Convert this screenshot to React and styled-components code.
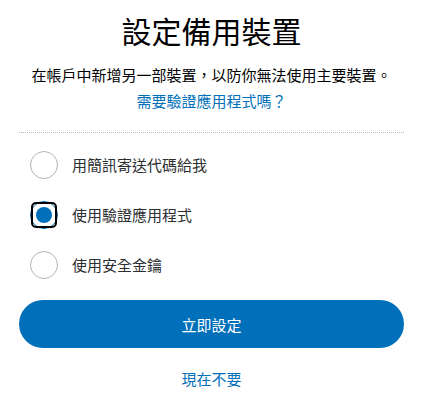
import React, { useState } from "react";
import styled, { createGlobalStyle } from "styled-components";

const GlobalStyle = createGlobalStyle`
  body {
    margin: 0;
    background: #ffffff;
    font-family: "Noto Sans CJK TC", "Noto Sans", "Liberation Sans", sans-serif;
    color: #2c2e2f;
  }
`;

const options = [
  { id: "sms", label: "用簡訊寄送代碼給我" },
  { id: "app", label: "使用驗證應用程式" },
  { id: "key", label: "使用安全金鑰" },
];

const App = () => {
  const [selected, setSelected] = useState("app");

  return (
    <>
      <GlobalStyle />
      <StyledPage>
        <Title>設定備用裝置</Title>
        <Intro>
          在帳戶中新增另一部裝置，以防你無法使用主要裝置。
          <br />
          <TextLink href="#">需要驗證應用程式嗎？</TextLink>
        </Intro>
        <Divider />
        <OptionList>
          {options.map((opt) => (
            <OptionRow key={opt.id} onClick={() => setSelected(opt.id)}>
              <RadioCircle $checked={selected === opt.id} />
              <OptionLabel>{opt.label}</OptionLabel>
            </OptionRow>
          ))}
        </OptionList>
        <PrimaryButton>立即設定</PrimaryButton>
        <SkipLink href="#">現在不要</SkipLink>
      </StyledPage>
    </>
  );
};

const StyledPage = styled.div`
  width: 423px;
  box-sizing: border-box;
  padding: 0 19px;
  display: flex;
  flex-direction: column;
  align-items: stretch;
`;

const Title = styled.h1`
  margin: 12px 0 0;
  font-size: 30px;
  line-height: 36px;
  font-weight: 400;
  text-align: center;
  color: #000000;
`;

const Intro = styled.p`
  margin: 14px 0 0;
  font-size: 15px;
  line-height: 26px;
  text-align: center;
  color: #000000;
`;

const TextLink = styled.a`
  color: #0070ba;
  text-decoration: none;
`;

const Divider = styled.div`
  margin-top: 18px;
  border-top: 1px dotted #b8b8b8;
`;

const OptionList = styled.div`
  display: flex;
  flex-direction: column;
  margin-top: 7px;
`;

const OptionRow = styled.label`
  display: flex;
  align-items: center;
  gap: 14px;
  height: 50px;
  padding-left: 11px;
  cursor: pointer;
`;

const RadioCircle = styled.span`
  position: relative;
  width: 28px;
  height: 28px;
  box-sizing: border-box;
  border-radius: 50%;
  border: 1px solid ${(p) => (p.$checked ? "#0070ba" : "#b5b5b5")};
  flex-shrink: 0;

  &::before {
    content: "";
    display: ${(p) => (p.$checked ? "block" : "none")};
    position: absolute;
    left: 50%;
    top: 50%;
    width: 16px;
    height: 16px;
    margin: -8px 0 0 -8px;
    border-radius: 50%;
    background: #0070ba;
  }

  &::after {
    content: "";
    display: ${(p) => (p.$checked ? "block" : "none")};
    position: absolute;
    left: 50%;
    top: 50%;
    width: 26px;
    height: 26px;
    margin: -13px 0 0 -13px;
    box-sizing: border-box;
    border: 2px solid #000000;
    border-radius: 5px;
  }
`;

const OptionLabel = styled.span`
  font-size: 15px;
  line-height: 26px;
  color: #2c2e2f;
`;

const PrimaryButton = styled.button`
  margin-top: 10px;
  height: 48px;
  border: none;
  border-radius: 24px;
  background: #0070ba;
  color: #ffffff;
  font-family: inherit;
  font-size: 15px;
  cursor: pointer;
`;

const SkipLink = styled.a`
  margin-top: 18px;
  align-self: center;
  font-size: 15px;
  line-height: 26px;
  color: #0070ba;
  text-decoration: none;
`;

export default App;
